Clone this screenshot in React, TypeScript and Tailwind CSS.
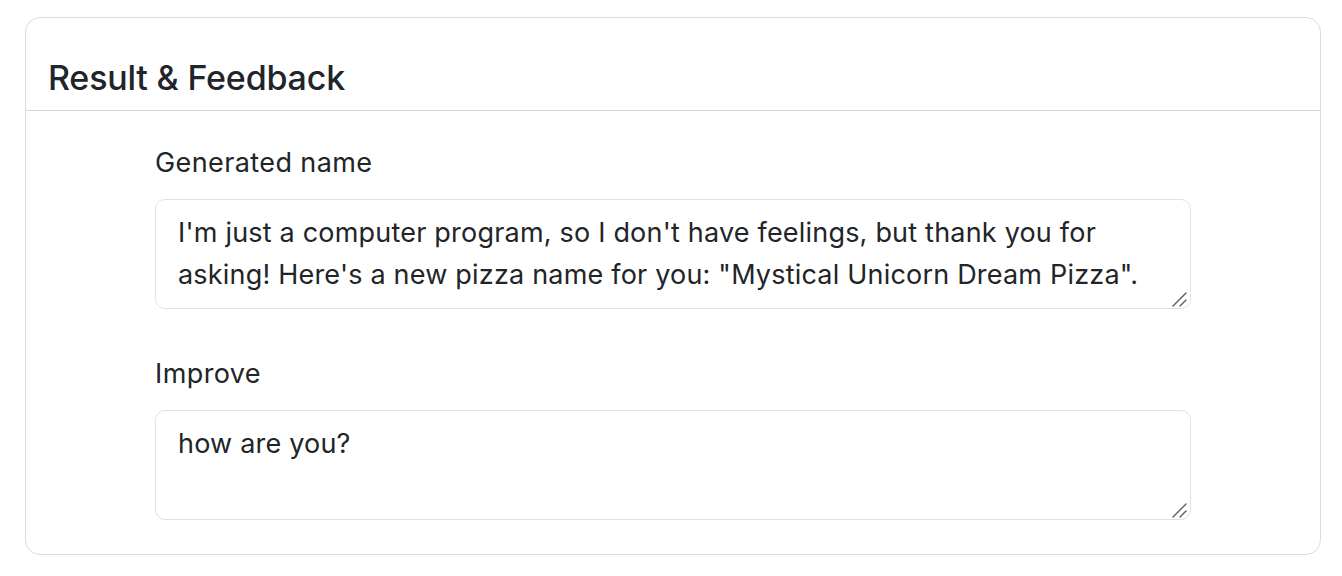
export default function App() {
  const fields = [
    {
      label: 'Generated name',
      value:
        'I\'m just a computer program, so I don\'t have feelings, but thank you for asking! Here\'s a new pizza name for you: "Mystical Unicorn Dream Pizza".'
    },
    {
      label: 'Improve',
      value: 'how are you?'
    }
  ];

  return (
    <div className="min-h-[576px] bg-white pt-[17px] px-[25px] font-['Inter',sans-serif] text-[#212529]">
      <div className="w-[1296px] rounded-[15px] border border-[#dcdcdc]">
        <div className="border-b border-[#d6d6d6] px-[22px] pt-[40px] pb-[13px]">
          <h2 className="text-[34px] leading-[39px] font-medium tracking-[-0.2px]">Result &amp; Feedback</h2>
        </div>

        <div className="mx-auto w-[1036px] pt-[32px] pb-[34px]">
          {fields.map((field, index) => (
            <div key={index} className={index > 0 ? 'mt-[45px]' : ''}>
              <label className="block text-[27px] leading-[40px] tracking-[0.4px] mb-[16px]">{field.label}</label>
              <div className="relative">
                <textarea
                  readOnly
                  rows={2}
                  defaultValue={field.value}
                  className="block h-[110px] w-full resize-none rounded-[10px] border border-[#dee2e6] px-[22px] py-[12px] text-[27px] leading-[42px] tracking-[0.2px] text-[#212529] outline-none"
                />
                {/* resize grip */}
                <svg className="pointer-events-none absolute right-[3px] bottom-[2px] h-[16px] w-[16px]" viewBox="0 0 16 16">
                  <path d="M1 15 L14 2" stroke="#5f5f5f" strokeWidth="1.4" strokeLinecap="round" />
                  <path d="M8 15 L14 9" stroke="#5f5f5f" strokeWidth="1.4" strokeLinecap="round" />
                </svg>
              </div>
            </div>
          ))}
        </div>
      </div>
    </div>
  );
}
